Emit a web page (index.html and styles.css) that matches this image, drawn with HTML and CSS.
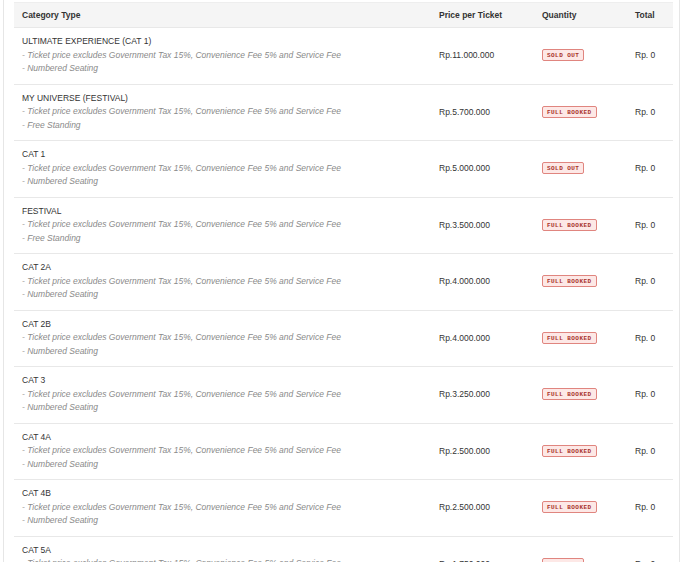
FILE: index.html
```html
<!DOCTYPE html>
<html lang="en">
<head>
  <meta charset="UTF-8">
  <meta name="viewport" content="width=device-width, initial-scale=1.0">
  <title>Ticket Categories</title>
  <link rel="stylesheet" href="styles.css">
</head>
<body>
  <div class="ticket-box">
    <table class="ticket-table">
      <thead>
        <tr>
          <th class="col-cat">Category Type</th>
          <th class="col-price">Price per Ticket</th>
          <th class="col-qty">Quantity</th>
          <th class="col-total">Total</th>
        </tr>
      </thead>
      <tbody>
        <tr>
          <td>
            <div class="cat-name">ULTIMATE EXPERIENCE (CAT 1)</div>
            <div class="cat-note">- Ticket price excludes Government Tax 15%, Convenience Fee 5% and Service Fee</div>
            <div class="cat-note">- Numbered Seating</div>
          </td>
          <td>Rp.11.000.000</td>
          <td><span class="badge">Sold out</span></td>
          <td>Rp. 0</td>
        </tr>
        <tr>
          <td>
            <div class="cat-name">MY UNIVERSE (FESTIVAL)</div>
            <div class="cat-note">- Ticket price excludes Government Tax 15%, Convenience Fee 5% and Service Fee</div>
            <div class="cat-note">- Free Standing</div>
          </td>
          <td>Rp.5.700.000</td>
          <td><span class="badge">Full booked</span></td>
          <td>Rp. 0</td>
        </tr>
        <tr>
          <td>
            <div class="cat-name">CAT 1</div>
            <div class="cat-note">- Ticket price excludes Government Tax 15%, Convenience Fee 5% and Service Fee</div>
            <div class="cat-note">- Numbered Seating</div>
          </td>
          <td>Rp.5.000.000</td>
          <td><span class="badge">Sold out</span></td>
          <td>Rp. 0</td>
        </tr>
        <tr>
          <td>
            <div class="cat-name">FESTIVAL</div>
            <div class="cat-note">- Ticket price excludes Government Tax 15%, Convenience Fee 5% and Service Fee</div>
            <div class="cat-note">- Free Standing</div>
          </td>
          <td>Rp.3.500.000</td>
          <td><span class="badge">Full booked</span></td>
          <td>Rp. 0</td>
        </tr>
        <tr>
          <td>
            <div class="cat-name">CAT 2A</div>
            <div class="cat-note">- Ticket price excludes Government Tax 15%, Convenience Fee 5% and Service Fee</div>
            <div class="cat-note">- Numbered Seating</div>
          </td>
          <td>Rp.4.000.000</td>
          <td><span class="badge">Full booked</span></td>
          <td>Rp. 0</td>
        </tr>
        <tr>
          <td>
            <div class="cat-name">CAT 2B</div>
            <div class="cat-note">- Ticket price excludes Government Tax 15%, Convenience Fee 5% and Service Fee</div>
            <div class="cat-note">- Numbered Seating</div>
          </td>
          <td>Rp.4.000.000</td>
          <td><span class="badge">Full booked</span></td>
          <td>Rp. 0</td>
        </tr>
        <tr>
          <td>
            <div class="cat-name">CAT 3</div>
            <div class="cat-note">- Ticket price excludes Government Tax 15%, Convenience Fee 5% and Service Fee</div>
            <div class="cat-note">- Numbered Seating</div>
          </td>
          <td>Rp.3.250.000</td>
          <td><span class="badge">Full booked</span></td>
          <td>Rp. 0</td>
        </tr>
        <tr>
          <td>
            <div class="cat-name">CAT 4A</div>
            <div class="cat-note">- Ticket price excludes Government Tax 15%, Convenience Fee 5% and Service Fee</div>
            <div class="cat-note">- Numbered Seating</div>
          </td>
          <td>Rp.2.500.000</td>
          <td><span class="badge">Full booked</span></td>
          <td>Rp. 0</td>
        </tr>
        <tr>
          <td>
            <div class="cat-name">CAT 4B</div>
            <div class="cat-note">- Ticket price excludes Government Tax 15%, Convenience Fee 5% and Service Fee</div>
            <div class="cat-note">- Numbered Seating</div>
          </td>
          <td>Rp.2.500.000</td>
          <td><span class="badge">Full booked</span></td>
          <td>Rp. 0</td>
        </tr>
        <tr>
          <td>
            <div class="cat-name">CAT 5A</div>
            <div class="cat-note">- Ticket price excludes Government Tax 15%, Convenience Fee 5% and Service Fee</div>
            <div class="cat-note">- Numbered Seating</div>
          </td>
          <td>Rp.1.750.000</td>
          <td><span class="badge">Sold out</span></td>
          <td>Rp. 0</td>
        </tr>
      </tbody>
    </table>
  </div>
</body>
</html>
```

FILE: styles.css
```css
* {
  box-sizing: border-box;
}
body {
  margin: 0;
  font-family: "Liberation Sans", Arial, sans-serif;
  color: #333;
  background: #fff;
  overflow: hidden;
}
.ticket-box {
  width: 677px;
  margin-left: 3px;
  padding: 2px 6px 0 10px;
  border-left: 1px solid #e6e6e6;
  border-right: 1px solid #e6e6e6;
}
.ticket-table {
  width: 100%;
  border-collapse: collapse;
  font-size: 8.5px;
}
.ticket-table th {
  background: #f5f5f5;
  border-top: 1px solid #eee;
  font-weight: bold;
  text-align: left;
  height: 25px;
  padding: 0 8px;
  color: #333;
}
.ticket-table td {
  border-top: 1px solid #e8e8e8;
  padding: 7px 8px 8px;
  vertical-align: middle;
  height: 56.5px;
}
.col-cat {
  width: 417px;
}
.col-price {
  width: 103px;
}
.col-qty {
  width: 93px;
}
.cat-name {
  line-height: 13.5px;
  color: #333;
}
.cat-note {
  line-height: 13.5px;
  font-style: italic;
  color: #8a8a8a;
}
.badge {
  display: inline-block;
  padding: 2px 4px 1px;
  border: 1px solid #e0857f;
  border-radius: 2px;
  background: #fde8e6;
  color: #a8322a;
  font-family: "Liberation Mono", monospace;
  font-size: 6px;
  font-weight: bold;
  text-transform: uppercase;
  letter-spacing: 0.45px;
  line-height: 7px;
}
```
